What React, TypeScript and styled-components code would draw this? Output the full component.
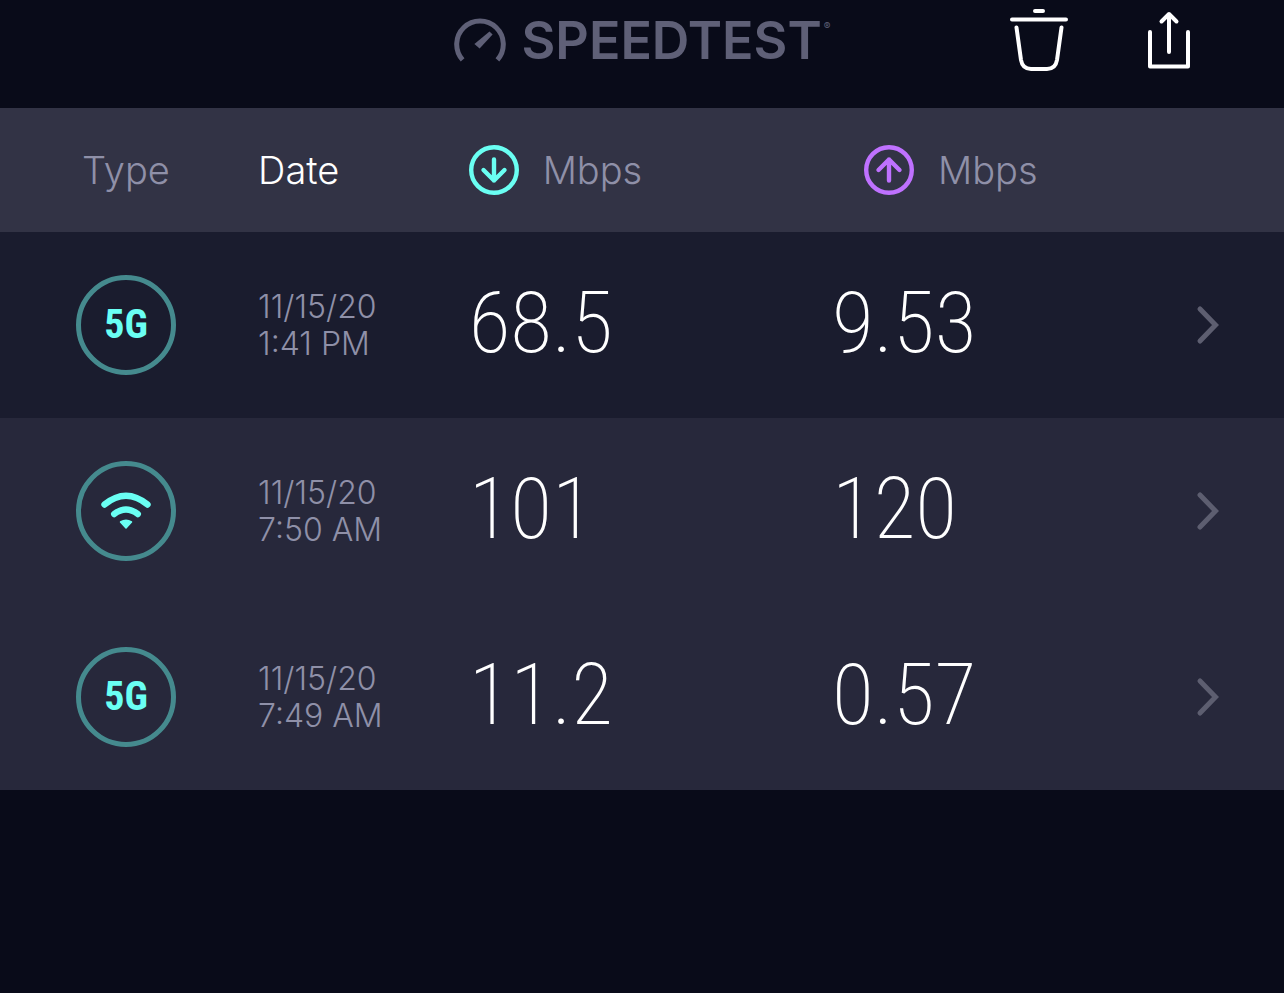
import React from "react";
import styled, { createGlobalStyle } from "styled-components";

const color = {
  page: "#090b19",
  head: "#323345",
  row: "#27283b",
  rowActive: "#1a1c2e",
  muted: "#8f90a8",
  dim: "#5f6077",
  chevron: "#5d5e70",
  cyan: "#6afff3",
  ring: "#458a8e",
  purple: "#bf71ff",
};

const GlobalStyle = createGlobalStyle`
  * { box-sizing: border-box; }
  body {
    margin: 0;
    background: ${color.page};
    color: #fff;
    font-family: Inter, "Liberation Sans", sans-serif;
  }
  svg { display: block; }
`;

const TopBar = styled.header`
  display: grid;
  grid-template-columns: 1fr auto 1fr;
  align-items: center;
  height: 108px;
  padding-bottom: 26px;
`;

const Logo = styled.h1`
  grid-column: 2;
  display: flex;
  align-items: center;
  gap: 16px;
  margin: 0;
  color: ${color.dim};
  font-size: 52px;
  line-height: 56px;
  font-weight: 600;
`;

const Wordmark = styled.span`
  display: flex;
`;

const Registered = styled.span`
  margin: 8px 0 0 2px;
  font-size: 10px;
  line-height: 10px;
  font-weight: 400;
`;

const Actions = styled.div`
  display: flex;
  justify-content: flex-end;
  gap: 73px;
  padding-right: 87px;
`;

const IconButton = styled.button`
  padding: 0;
  border: 0;
  background: none;
  color: inherit;
  cursor: pointer;
`;

const Table = styled.table`
  width: 100%;
  table-layout: fixed;
  border-collapse: collapse;
`;

const Column = styled.col<{ $width?: string }>`
  width: ${(p) => p.$width ?? "auto"};
`;

const HeadRow = styled.tr`
  height: 124px;
  background: ${color.head};
`;

const HeadCell = styled.th<{ $indent?: number }>`
  padding: 0 0 0 ${(p) => p.$indent ?? 0}px;
  text-align: left;
`;

const SortButton = styled.button<{ $active?: boolean }>`
  display: flex;
  align-items: center;
  gap: 24px;
  padding: 0;
  border: 0;
  background: none;
  color: ${(p) => (p.$active ? "#fff" : color.muted)};
  font: 300 38px/48px Inter, "Liberation Sans", sans-serif;
  cursor: pointer;
`;

const ResultRow = styled.tr<{ $active?: boolean }>`
  height: 186px;
  background: ${(p) => (p.$active ? color.rowActive : color.row)};
`;

const Cell = styled.td<{ $indent?: number }>`
  padding: 0 0 0 ${(p) => p.$indent ?? 0}px;
`;

const TypeBadge = styled.div`
  display: flex;
  align-items: center;
  justify-content: center;
  width: 100px;
  height: 100px;
  border: 5px solid ${color.ring};
  border-radius: 50%;
  color: ${color.cyan};
  font: 700 40px/48px "Roboto Condensed", Roboto, sans-serif;
`;

const Stamp = styled.time`
  display: block;
  color: ${color.muted};
  font-size: 32px;
  line-height: 37px;
  font-weight: 300;
  white-space: nowrap;
`;

const Speed = styled.span`
  display: block;
  padding-bottom: 4px;
  font: 200 86px/96px "Roboto Condensed", Roboto, sans-serif;
`;

const OpenCell = styled.td`
  padding: 0 64px 0 0;
  color: ${color.chevron};
`;

const OpenButton = styled(IconButton)`
  display: block;
  margin-left: auto;
`;

const GaugeIcon = () => (
  <svg width="52" height="46" viewBox="0 0 52 46" fill="none" aria-hidden="true">
    <path d="M8.6 41.8A23.3 23.3 0 1 1 43.4 41.8" stroke="currentColor" strokeWidth="5" />
    <path d="M35.5 13.5L38.6 16.4L25.6 30.6L20.4 26Z" fill="currentColor" />
  </svg>
);

const TrashIcon = () => (
  <svg width="58" height="64" viewBox="0 0 58 64" fill="none" stroke="#fff" strokeWidth="4" strokeLinecap="round" aria-hidden="true">
    <path d="M25 2H33M2 10.5H56" />
    <path d="M6.5 18.5L11 51Q12.500 60 21 60H37Q45.500 60 47 51L51.500 18.500" />
  </svg>
);

const ShareIcon = () => (
  <svg width="56" height="64" viewBox="0 0 56 64" fill="none" stroke="#fff" strokeWidth="4" strokeLinecap="round" strokeLinejoin="round" aria-hidden="true">
    <path d="M28 43V5M20.5 12.5L28 5L35.5 12.5" />
    <path d="M9 23V57.5H47V23" />
  </svg>
);

const DirectionIcon = ({ up }: { up?: boolean }) => (
  <svg width="50" height="50" viewBox="0 0 50 50" fill="none" stroke={up ? color.purple : color.cyan} strokeWidth="4.4" strokeLinecap="round" strokeLinejoin="round" aria-hidden="true">
    <circle cx="25" cy="25" r="22.8" />
    <path d={up ? "M25 35.500V14.500M14.500 25L25 14.500L35.500 25" : "M25 14.500V35.500M14.500 25L25 35.500L35.500 25"} />
  </svg>
);

const WifiIcon = () => (
  <svg width="50" height="38" viewBox="0 0 50 38" fill="none" stroke={color.cyan} strokeWidth="6.4" strokeLinecap="round" role="img" aria-label="Wi-Fi">
    <path d="M3.5 12.5Q25 -5 46.5 12.5" />
    <path d="M13.2 22Q25 13 36.8 22" />
    <path d="M19.5 30Q25 26.5 30.5 30L25 36Z" fill={color.cyan} strokeWidth="1.5" strokeLinejoin="round" />
  </svg>
);

const ChevronIcon = () => (
  <svg width="24" height="40" viewBox="0 0 24 40" fill="none" stroke="currentColor" strokeWidth="5" strokeLinecap="round" strokeLinejoin="miter" aria-hidden="true">
    <path d="M4 4L19.500 20L4 36" />
  </svg>
);

const results = [
  { type: "5G", date: "11/15/20", time: "1:41 PM", down: "68.5", up: "9.53", active: true },
  { type: "wifi", date: "11/15/20", time: "7:50 AM", down: "101", up: "120", active: false },
  { type: "5G", date: "11/15/20", time: "7:49 AM", down: "11.2", up: "0.57", active: false },
];

export default function App() {
  return (
    <>
      <GlobalStyle />
      <TopBar>
        <Logo>
          <GaugeIcon />
          <Wordmark>
            SPEEDTEST<Registered>®</Registered>
          </Wordmark>
        </Logo>
        <Actions>
          <IconButton aria-label="Delete results"><TrashIcon /></IconButton>
          <IconButton aria-label="Share results"><ShareIcon /></IconButton>
        </Actions>
      </TopBar>
      <main>
        <Table>
          <colgroup>
            <Column $width="20.1%" />
            <Column $width="16.4%" />
            <Column $width="28.3%" />
            <Column $width="25%" />
            <Column />
          </colgroup>
          <thead>
            <HeadRow>
              <HeadCell $indent={82}><SortButton>Type</SortButton></HeadCell>
              <HeadCell><SortButton $active>Date</SortButton></HeadCell>
              <HeadCell><SortButton><DirectionIcon />Mbps</SortButton></HeadCell>
              <HeadCell $indent={32}><SortButton><DirectionIcon up />Mbps</SortButton></HeadCell>
              <HeadCell />
            </HeadRow>
          </thead>
          <tbody>
            {results.map((r) => (
              <ResultRow key={r.time} $active={r.active}>
                <Cell $indent={76}>
                  <TypeBadge>{r.type === "wifi" ? <WifiIcon /> : r.type}</TypeBadge>
                </Cell>
                <Cell>
                  <Stamp>{r.date}<br />{r.time}</Stamp>
                </Cell>
                <Cell><Speed>{r.down}</Speed></Cell>
                <Cell><Speed>{r.up}</Speed></Cell>
                <OpenCell>
                  <OpenButton aria-label={`Open result from ${r.date} ${r.time}`}><ChevronIcon /></OpenButton>
                </OpenCell>
              </ResultRow>
            ))}
          </tbody>
        </Table>
      </main>
    </>
  );
}
